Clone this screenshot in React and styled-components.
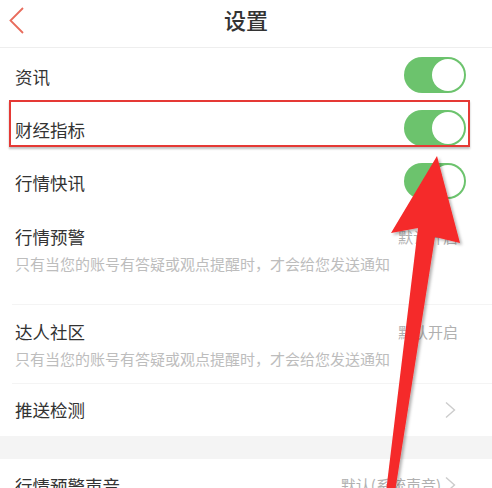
import React from "react";
import styled, { createGlobalStyle } from "styled-components";

const Global = createGlobalStyle`
  html, body { margin: 0; padding: 0; background: #fff; }
  body { font-family: "Noto Sans CJK SC", "Noto Sans", sans-serif; color: #333; }
`;

const Page = styled.div`
  position: relative;
  width: 492px;
  height: 488px;
  overflow: hidden;
  background: #fff;
`;

const Header = styled.header`
  display: grid;
  grid-template-columns: 60px 1fr 60px;
  align-items: start;
  height: 47px;
  border-bottom: 1px solid #eeeeee;
`;

const Back = styled.div`
  padding: 7px 0 0 8px;
  line-height: 0;
`;

const Title = styled.h1`
  margin: 0;
  text-align: center;
  font-size: 22px;
  font-weight: 500;
  line-height: 38px;
  color: #333;
`;

const Row = styled.div`
  display: flex;
  align-items: center;
  justify-content: space-between;
  height: ${(p) => p.$h || 53}px;
  padding: 0 ${(p) => p.$pr || 26}px 0 15px;
  box-sizing: border-box;
`;

const Label = styled.span`
  font-size: 17.5px;
  line-height: 24px;
  color: #333;
  padding-top: ${(p) => p.$shift || 0}px;
`;

const Toggle = styled.div`
  width: 62px;
  height: 36px;
  border-radius: 18px;
  background: #6cc36d;
  display: flex;
  align-items: center;
  justify-content: flex-end;
  padding: 0 2px;
  box-sizing: border-box;
`;

const Knob = styled.div`
  width: 32px;
  height: 32px;
  border-radius: 50%;
  background: #fff;
`;

const Block = styled.div`
  padding: ${(p) => p.$pt}px 34px ${(p) => p.$pb}px 15px;
  position: relative;
  &::after {
    content: "";
    position: absolute;
    left: 12px;
    right: 0;
    bottom: 0;
    height: 1px;
    background: #f4f4f4;
  }
`;

const BlockHead = styled.div`
  display: flex;
  justify-content: space-between;
  align-items: center;
`;

const Value = styled.span`
  font-size: 15px;
  line-height: 24px;
  color: #b0b0b0;
  display: flex;
  align-items: center;
  gap: 3px;
`;

const Sub = styled.div`
  margin-top: 4px;
  font-size: 15px;
  line-height: 22px;
  color: #bdbdbd;
`;

const Gap = styled.div`
  height: 23px;
  background: #f4f4f4;
`;

const Highlight = styled.div`
  position: absolute;
  left: 9px;
  top: 100px;
  width: 461px;
  height: 47px;
  box-sizing: border-box;
  border: 2px solid #e53935;
  box-shadow: 0 2px 2px rgba(0, 0, 0, 0.25);
`;

const ArrowLayer = styled.svg`
  position: absolute;
  left: 0;
  top: 0;
  pointer-events: none;
`;

const Chevron = () => (
  <svg width="14" height="18" viewBox="0 0 14 18">
    <path d="M2 1.5 L10.5 9 L2 16.5" fill="none" stroke="#cccccc" strokeWidth="1.4" />
  </svg>
);

const BackIcon = () => (
  <svg width="18" height="28" viewBox="0 0 18 28">
    <path d="M15 1 L2.5 13.5 L15 26" fill="none" stroke="#e86c5c" strokeWidth="1.8" />
  </svg>
);

const Switch = () => (
  <Toggle>
    <Knob />
  </Toggle>
);

export default function App() {
  return (
    <>
      <Global />
      <Page>
        <Header>
          <Back>
            <BackIcon />
          </Back>
          <Title>设置</Title>
          <div />
        </Header>
        <Row>
          <Label $shift={4}>资讯</Label>
          <Switch />
        </Row>
        <Row>
          <Label $shift={4}>财经指标</Label>
          <Switch />
        </Row>
        <Row>
          <Label $shift={4}>行情快讯</Label>
          <Switch />
        </Row>
        <Block $pt={18} $pb={30}>
          <BlockHead>
            <Label>行情预警</Label>
            <Value>默认开启</Value>
          </BlockHead>
          <Sub>只有当您的账号有答疑或观点提醒时，才会给您发送通知</Sub>
        </Block>
        <Block $pt={15} $pb={14}>
          <BlockHead>
            <Label>达人社区</Label>
            <Value>默认开启</Value>
          </BlockHead>
          <Sub>只有当您的账号有答疑或观点提醒时，才会给您发送通知</Sub>
        </Block>
        <Row $h={52} $pr={34}>
          <Label>推送检测</Label>
          <Chevron />
        </Row>
        <Gap />
        <Row $h={52} $pr={34}>
          <Label $shift={2}>行情预警声音</Label>
          <Value>
            默认(系统声音)
            <Chevron />
          </Value>
        </Row>
        <Highlight />
        <ArrowLayer width="492" height="488" viewBox="0 0 492 488">
          <defs>
            <filter id="sh" x="-20%" y="-20%" width="140%" height="140%">
              <feDropShadow dx="2" dy="2" stdDeviation="1.5" floodColor="#000" floodOpacity="0.3" />
            </filter>
          </defs>
          <polygon
            points="437,156 460,243 435,237 395,492 386,492 418,228 391,233"
            fill="#f52a2a"
            filter="url(#sh)"
          />
        </ArrowLayer>
      </Page>
    </>
  );
}
